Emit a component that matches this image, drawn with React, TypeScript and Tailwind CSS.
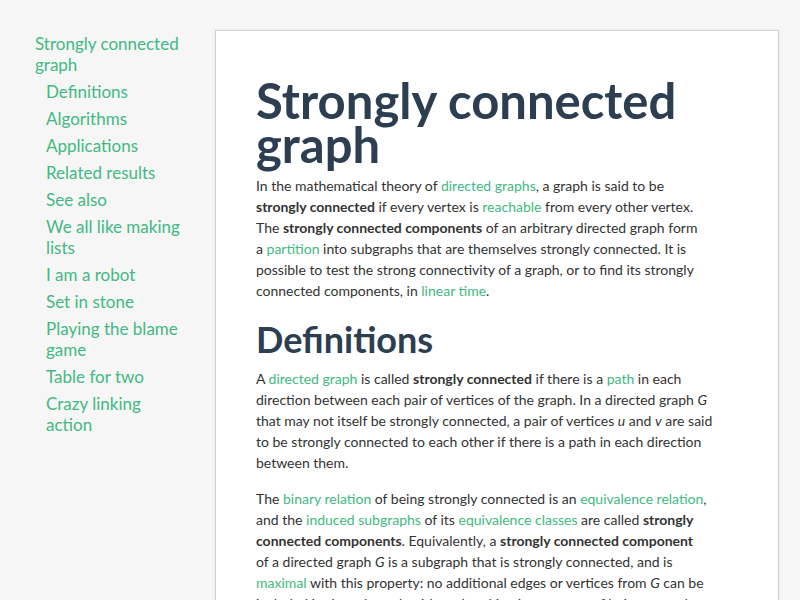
const nav = [
  "Definitions",
  "Algorithms",
  "Applications",
  "Related results",
  "See also",
  "We all like making lists",
  "I am a robot",
  "Set in stone",
  "Playing the blame game",
  "Table for two",
  "Crazy linking action",
];

function A({ children }: { children: React.ReactNode }) {
  return <a className="text-[#42b983]">{children}</a>;
}

export default function App() {
  return (
    <div className="min-h-[600px] bg-[#f6f6f6] flex items-start font-['Lato',sans-serif] overflow-hidden h-[600px]">
      <nav className="w-[215px] shrink-0 pl-[35px] pr-[28px] pt-[33px] text-[17px] leading-[21px] text-[#42b983]">
        <a className="block">Strongly connected graph</a>
        <ul className="pl-[11px]">
          {nav.map(item => (
            <li key={item} className="mt-[6px]">
              <a>{item}</a>
            </li>
          ))}
        </ul>
      </nav>
      <main className="mt-[30px] w-[564px] shrink-0 bg-white border border-[#d0d0d0] shadow-[0_0_2px_rgba(0,0,0,0.08)] pl-[40px] pt-[47px] pb-10 text-[14px] leading-[21px] text-[#333]">
        <div className="w-[480px]">
          <h1 className="text-[49px] leading-[44px] font-bold text-[#2c3e50] mb-[9px]">
            Strongly connected graph
          </h1>
          <p>
            In the mathematical theory of <A>directed graphs</A>, a graph is said to be
            <br />
            <b>strongly connected</b> if every vertex is <A>reachable</A> from every other vertex.
            <br />
            The <b>strongly connected components</b> of an arbitrary directed graph form
            <br />
            a <A>partition</A> into subgraphs that are themselves strongly connected. It is
            <br />
            possible to test the strong connectivity of a graph, or to find its strongly
            <br />
            connected components, in <A>linear time</A>.
          </p>
          <h2 className="text-[36px] leading-[40px] font-bold text-[#2c3e50] mt-[18px] mb-[9px]">
            Definitions
          </h2>
          <p>
            A <A>directed graph</A> is called <b>strongly connected</b> if there is a <A>path</A> in
            each
            <br />
            direction between each pair of vertices of the graph. In a directed graph <i>G</i>
            <br />
            that may not itself be strongly connected, a pair of vertices <i>u</i> and <i>v</i> are
            said
            <br />
            to be strongly connected to each other if there is a path in each direction
            <br />
            between them.
          </p>
          <p className="mt-[15px]">
            The <A>binary relation</A> of being strongly connected is an{" "}
            <A>equivalence relation</A>,
            <br />
            and the <A>induced subgraphs</A> of its <A>equivalence classes</A> are called{" "}
            <b>strongly</b>
            <br />
            <b>connected components</b>. Equivalently, a <b>strongly connected component</b>
            <br />
            of a directed graph <i>G</i> is a subgraph that is strongly connected, and is
            <br />
            <A>maximal</A> with this property: no additional edges or vertices from <i>G</i> can be
            <br />
            included in the subgraph without breaking its property of being strongly
            connected.
          </p>
        </div>
      </main>
    </div>
  );
}
